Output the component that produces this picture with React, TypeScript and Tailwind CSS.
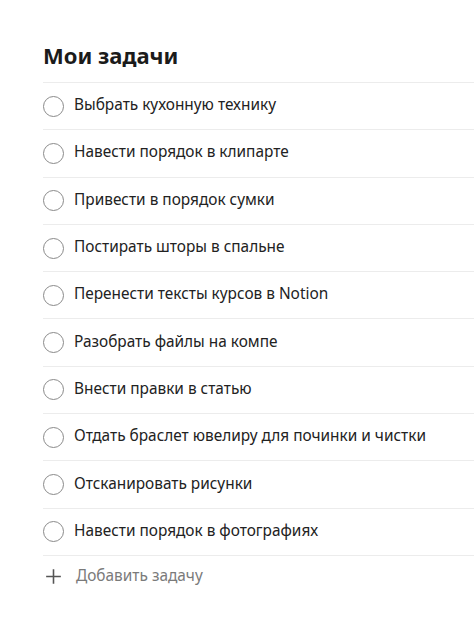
const tasks = [
  'Выбрать кухонную технику',
  'Навести порядок в клипарте',
  'Привести в порядок сумки',
  'Постирать шторы в спальне',
  'Перенести тексты курсов в Notion',
  'Разобрать файлы на компе',
  'Внести правки в статью',
  'Отдать браслет ювелиру для починки и чистки',
  'Отсканировать рисунки',
  'Навести порядок в фотографиях',
];

export default function App() {
  return (
    <div className="min-h-screen bg-white pl-[43px] pt-[39px]" style={{ fontFamily: '"Noto Sans", "Open Sans", sans-serif' }}>
      <h1 className="text-[22px] font-bold leading-[32px] text-[#1b1b1b] mb-[11px]">Мои задачи</h1>
      <ul className="border-t border-[#ececec]">
        {tasks.map((t) => (
          <li key={t} className="flex items-center h-[47.3px] border-b border-[#ececec]">
            <span className="w-[21px] h-[21px] rounded-full border-[1.5px] border-[#8a8a8a] shrink-0" />
            <span className="ml-[10px] text-[15.4px] leading-[22px] -mt-[2px] text-[#222]">{t}</span>
          </li>
        ))}
      </ul>
      <div className="flex items-center h-[42px]">
        <svg className="w-[21px] h-[21px] text-[#555]" viewBox="0 0 20 20" fill="none" stroke="currentColor" strokeWidth="1.5">
          <path d="M10 3v14M3 10h14" />
        </svg>
        <span className="ml-[12px] text-[15.4px] -mt-[2px] text-[#7a7a7a]">Добавить задачу</span>
      </div>
    </div>
  );
}
